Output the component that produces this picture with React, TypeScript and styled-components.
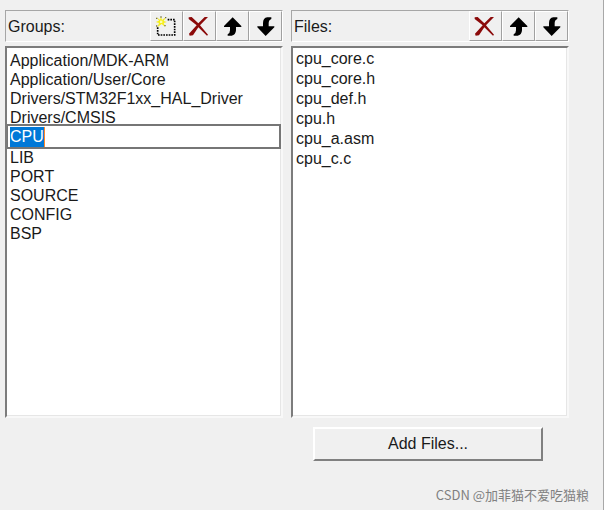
import React, { useState } from "react";
import styled, { createGlobalStyle } from "styled-components";

const GlobalStyle = createGlobalStyle`
  * { box-sizing: border-box; }
  body {
    margin: 0;
    background: #f0f0f0;
    color: #1a1a1a;
    font-family: "Liberation Sans", Arial, sans-serif;
    font-size: 16px;
  }
`;

const Dialog = styled.main`
  display: flex;
  flex-direction: column;
  min-height: 100vh;
  padding: 10px 34px 5px 5px;
  border-right: 1px solid #a8a8a8;
`;

const Columns = styled.div`
  flex: 1;
  display: grid;
  grid-template-columns: 1fr 1fr;
  gap: 8px;
`;

const Panel = styled.section`
  display: flex;
  flex-direction: column;
  gap: 4px;
  min-width: 0;
`;

const PanelHeader = styled.header`
  display: flex;
  align-items: center;
  justify-content: space-between;
  height: 32px;
  padding-left: 2px;
  border: 1px solid #a6a6a6;
  border-right-color: #fff;
  border-bottom-color: #fff;
`;

const PanelTitle = styled.h2`
  margin: 0;
  padding-top: 2px;
  font-size: 16px;
  font-weight: 400;
  line-height: 20px;
`;

const ToolBar = styled.div`
  display: flex;
  height: 100%;
`;

const ToolButton = styled.button`
  display: grid;
  place-items: center;
  width: 33px;
  padding: 2px 0 0;
  background: #f0f0f0;
  border: 1px solid #fff;
  border-right-color: #a0a0a0;
  border-bottom-color: #a0a0a0;
`;

const ListBox = styled.ul<{ $rowHeight: number; $padTop: number }>`
  flex: 1;
  margin: 0;
  padding: ${(p) => p.$padTop}px 0 2px;
  list-style: none;
  line-height: ${(p) => p.$rowHeight}px;
  background: #fff;
  border: 2px solid;
  border-color: #7c7c7c #f8f8f8 #f8f8f8 #7c7c7c;
  box-shadow: inset -1px -1px 0 #e6e6e6;
`;

const Item = styled.li`
  padding-left: 3px;
  white-space: nowrap;
`;

const EditItem = styled.li`
  position: relative;
  display: flex;
  align-items: center;
  height: 25px;
  margin: -3px 0 -1px;
  padding-left: 2px;
  background: #fff;
  border: 2px solid #767676;
  border-left-width: 1px;
`;

const NameInput = styled.input`
  field-sizing: content;
  height: 20px;
  padding: 0;
  border: 0;
  border-right: 1px solid #ff8728;
  outline: 0;
  background: #0078d7;
  color: #fff;
  font: inherit;
  &::selection {
    background: #0078d7;
    color: #fff;
  }
`;

const Footer = styled.footer`
  display: flex;
  flex-direction: column;
  gap: 24px;
  padding-top: 9px;
`;

const AddButton = styled.button`
  align-self: flex-end;
  width: 230px;
  height: 34px;
  margin-right: 26px;
  padding: 0;
  background: #f0f0f0;
  color: inherit;
  font: inherit;
  border: 2px solid;
  border-color: #fff #808080 #808080 #fff;
`;

const Credit = styled.small`
  align-self: flex-end;
  margin-right: -20px;
  color: #808080;
  font-family: "Noto Sans CJK SC", sans-serif;
  font-size: 13px;
  line-height: 20px;
`;

const Icon = styled.svg`
  display: block;
  width: 24px;
  height: 24px;
`;

const NewIcon = () => (
  <Icon viewBox="0 0 72 72" aria-hidden="true">
    <path
      d="M38 14H59V60H8V34"
      fill="none"
      stroke="#000"
      strokeWidth="5"
      strokeDasharray="5 3"
    />
    <path
      d="M18 5L21 15L33 6L26 18L36 21L26 24L31 36L20 27L7 37L12 24L2 21L12 17L5 7L15 14Z"
      fill="#f6ef1c"
    />
    <path d="M3 8h4v4h-4zM16 4h4v4h-4zM3 31h4v4h-4zM28 30h4v4h-4zM30 6h4v4h-4z" fill="#77733c" />
    <path d="M15 17h7v7h-7z" fill="#fffbb0" />
  </Icon>
);

const DeleteIcon = () => (
  <Icon viewBox="0 0 72 72" aria-hidden="true">
    <path
      d="M2 7L11 6L31 25L50 6H60L36 31L60 59L57 62L31 37L15 61L5 62L3 56L26 31L2 12Z"
      fill="#8b0a0a"
    />
  </Icon>
);

const UpIcon = () => (
  <Icon viewBox="0 0 72 72" aria-hidden="true">
    <path d="M35 7L61 33V36H45V46Q44 61 32 62H20V58Q27 55 27 46V36H9V33Z" fill="#000" />
  </Icon>
);

const DownIcon = () => (
  <Icon viewBox="0 0 72 72" aria-hidden="true">
    <path d="M35 63L61 37V34H44V25Q44 15 52 12V7H40Q27 8 27 25V34H10V37Z" fill="#000" />
  </Icon>
);

const groups = [
  "Application/MDK-ARM",
  "Application/User/Core",
  "Drivers/STM32F1xx_HAL_Driver",
  "Drivers/CMSIS",
  "CPU",
  "LIB",
  "PORT",
  "SOURCE",
  "CONFIG",
  "BSP",
];

const files = ["cpu_core.c", "cpu_core.h", "cpu_def.h", "cpu.h", "cpu_a.asm", "cpu_c.c"];

export default function App() {
  const [name, setName] = useState("CPU");
  return (
    <>
      <GlobalStyle />
      <Dialog>
        <Columns>
          <Panel aria-labelledby="groups-title">
            <PanelHeader>
              <PanelTitle id="groups-title">Groups:</PanelTitle>
              <ToolBar>
                <ToolButton type="button" aria-label="New group"><NewIcon /></ToolButton>
                <ToolButton type="button" aria-label="Delete group"><DeleteIcon /></ToolButton>
                <ToolButton type="button" aria-label="Move group up"><UpIcon /></ToolButton>
                <ToolButton type="button" aria-label="Move group down"><DownIcon /></ToolButton>
              </ToolBar>
            </PanelHeader>
            <ListBox $rowHeight={19} $padTop={3}>
              {groups.map((group) =>
                group === "CPU" ? (
                  <EditItem key={group}>
                    <NameInput
                      aria-label="Group name"
                      value={name}
                      onChange={(e) => setName(e.target.value)}
                    />
                  </EditItem>
                ) : (
                  <Item key={group}>{group}</Item>
                )
              )}
            </ListBox>
          </Panel>
          <Panel aria-labelledby="files-title">
            <PanelHeader>
              <PanelTitle id="files-title">Files:</PanelTitle>
              <ToolBar>
                <ToolButton type="button" aria-label="Remove file"><DeleteIcon /></ToolButton>
                <ToolButton type="button" aria-label="Move file up"><UpIcon /></ToolButton>
                <ToolButton type="button" aria-label="Move file down"><DownIcon /></ToolButton>
              </ToolBar>
            </PanelHeader>
            <ListBox $rowHeight={20} $padTop={1}>
              {files.map((file) => (
                <Item key={file}>{file}</Item>
              ))}
            </ListBox>
          </Panel>
        </Columns>
        <Footer>
          <AddButton type="button">Add Files...</AddButton>
          <Credit>CSDN @加菲猫不爱吃猫粮</Credit>
        </Footer>
      </Dialog>
    </>
  );
}
